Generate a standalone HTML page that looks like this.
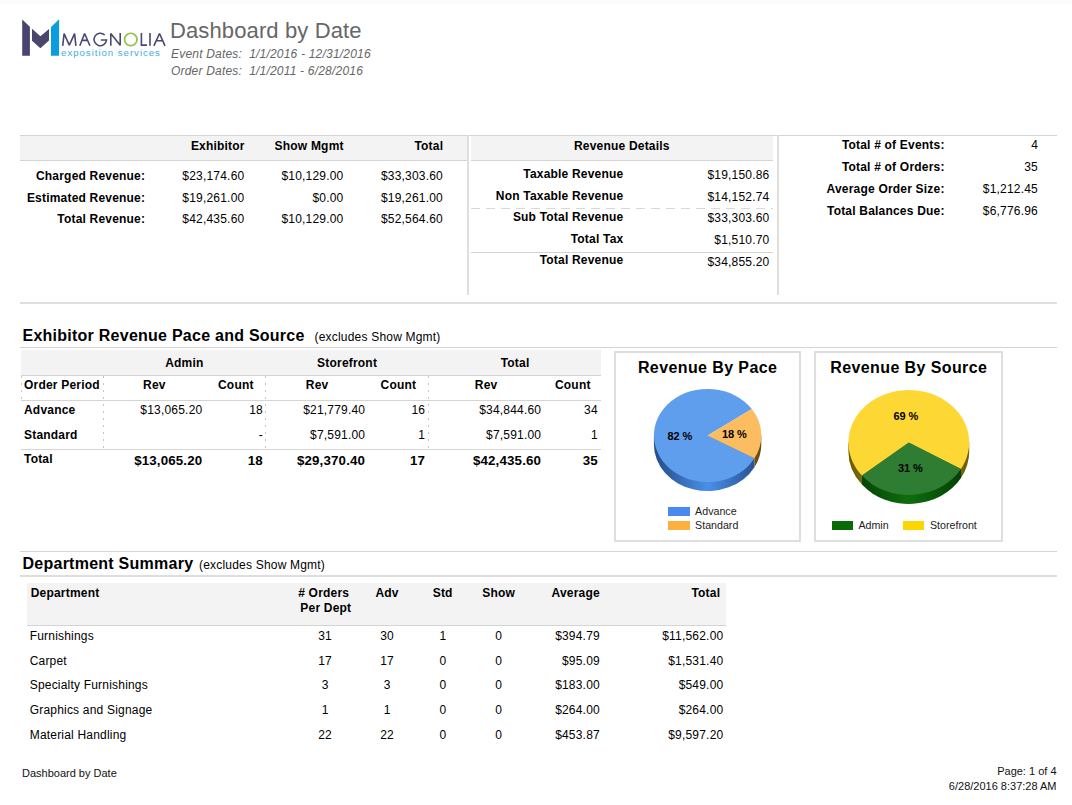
<!DOCTYPE html>
<html><head><meta charset="utf-8"><style>
html,body{margin:0;padding:0;background:#fff;width:1072px;height:805px;overflow:hidden;position:relative}
</style></head><body>
<div style="position:absolute;left:0px;top:0px;width:1072px;height:4px;background:#fbfbfb;"></div>
<div style="position:absolute;left:20px;top:135px;width:1037px;height:1px;background:#d4d4d4;"></div>
<div style="position:absolute;left:20px;top:136px;width:447px;height:24px;background:#f3f3f3;"></div>
<div style="position:absolute;left:20px;top:160px;width:447px;height:1px;background:#d4d4d4;"></div>
<div style="position:absolute;left:467px;top:135px;width:2px;height:160px;background:#dedede;"></div>
<div style="position:absolute;left:471px;top:136px;width:302px;height:24px;background:#f3f3f3;"></div>
<div style="position:absolute;left:471px;top:160px;width:302px;height:1px;background:#d4d4d4;"></div>
<div style="position:absolute;left:471px;top:208px;width:302px;height:1px;background:repeating-linear-gradient(90deg,#d8d8d8 0 9px,transparent 9px 15px)"></div>
<div style="position:absolute;left:471px;top:252px;width:302px;height:1px;background:#d4d4d4;"></div>
<div style="position:absolute;left:777px;top:135px;width:2px;height:160px;background:#dedede;"></div>
<div style="position:absolute;left:20px;top:302px;width:1037px;height:2px;background:#dedede;"></div>
<div style="position:absolute;left:20px;top:347px;width:1037px;height:1px;background:#d4d4d4;"></div>
<div style="position:absolute;left:21px;top:350px;width:580px;height:25px;background:#f3f3f3;"></div>
<div style="position:absolute;left:21px;top:375px;width:580px;height:1px;background:#d4d4d4;"></div>
<div style="position:absolute;left:21px;top:400px;width:580px;height:1px;background:#d4d4d4;"></div>
<div style="position:absolute;left:21px;top:449px;width:580px;height:1px;background:#d4d4d4;"></div>
<div style="position:absolute;left:21px;top:376px;width:1px;height:24px;background:repeating-linear-gradient(180deg,#c4c4c4 0 2px,transparent 2px 7px)"></div>
<div style="position:absolute;left:103px;top:376px;width:1px;height:73px;background:repeating-linear-gradient(180deg,#c4c4c4 0 2px,transparent 2px 7px)"></div>
<div style="position:absolute;left:265px;top:376px;width:1px;height:73px;background:repeating-linear-gradient(180deg,#c4c4c4 0 2px,transparent 2px 7px)"></div>
<div style="position:absolute;left:428px;top:376px;width:1px;height:73px;background:repeating-linear-gradient(180deg,#c4c4c4 0 2px,transparent 2px 7px)"></div>
<div style="position:absolute;left:614px;top:351px;width:183px;height:187px;border:2px solid #dedede"></div>
<div style="position:absolute;left:814px;top:351px;width:185px;height:187px;border:2px solid #dedede"></div>
<svg style="position:absolute;left:0;top:0" width="1072" height="805">
<defs>
<linearGradient id="gb" x1="653" x2="762" y1="0" y2="0" gradientUnits="userSpaceOnUse"><stop offset="0" stop-color="#234a85"/><stop offset="0.5" stop-color="#4a8fe8"/><stop offset="1" stop-color="#234a85"/></linearGradient>
<linearGradient id="gy" x1="848" x2="970" y1="0" y2="0" gradientUnits="userSpaceOnUse"><stop offset="0" stop-color="#6a5c00"/><stop offset="0.5" stop-color="#a08c10"/><stop offset="1" stop-color="#6a5c00"/></linearGradient>
<linearGradient id="go" x1="653" x2="762" y1="0" y2="0" gradientUnits="userSpaceOnUse"><stop offset="0" stop-color="#6a4a10"/><stop offset="0.5" stop-color="#a07830"/><stop offset="1" stop-color="#6a4a10"/></linearGradient>
<linearGradient id="gg" x1="848" x2="970" y1="0" y2="0" gradientUnits="userSpaceOnUse"><stop offset="0" stop-color="#033803"/><stop offset="0.5" stop-color="#0e6e0e"/><stop offset="1" stop-color="#033803"/></linearGradient>
</defs>
<path d="M707.60,435.50 L754.48,458.23 L754.48,467.23 A53.7,46.6 0 0 1 653.90,444.50 L653.90,435.50 Z" fill="url(#gb)"/>
<path d="M707.60,435.50 L761.30,435.50 L761.30,444.50 A53.7,46.6 0 0 1 754.48,467.23 L754.48,458.23 Z" fill="url(#go)"/>
<path d="M707.60,435.50 L754.48,458.23 A53.7,46.6 0 1 1 751.80,409.04 Z" fill="#5f9ded"/>
<path d="M707.60,435.50 L751.80,409.04 A53.7,46.6 0 0 1 754.48,458.23 Z" fill="#fbbd5f"/>
<path d="M908.80,442.50 L969.20,442.50 L969.20,451.50 A60.4,52.5 0 0 1 961.00,477.91 L961.00,468.91 Z" fill="url(#gy)"/>
<path d="M908.80,442.50 L861.93,475.61 L861.93,484.61 A60.4,52.5 0 0 1 848.40,451.50 L848.40,442.50 Z" fill="url(#gy)"/>
<path d="M908.80,442.50 L961.00,468.91 L961.00,477.91 A60.4,52.5 0 0 1 861.93,484.61 L861.93,475.61 Z" fill="url(#gg)"/>
<path d="M908.80,442.50 L861.93,475.61 A60.4,52.5 0 1 1 961.00,468.91 Z" fill="#fdd835"/>
<path d="M908.80,442.50 L961.00,468.91 A60.4,52.5 0 0 1 861.93,475.61 Z" fill="#2e7d32"/>
<rect x="668" y="507" width="22" height="9" fill="#4a8af0"/>
<rect x="668" y="521" width="22" height="9" fill="#fbb040"/>
<rect x="832" y="521" width="21" height="9" fill="#086a08"/>
<rect x="903" y="521" width="21" height="9" fill="#fdd600"/>
<polygon points="22.2,19.5 29.9,26.7 29.9,55.8 22.2,55.8" fill="#48456e"/>
<polygon points="32,28.7 40.4,36.3 49,29 49,40.4 40.4,48.3 32,40.7" fill="#48456e"/>
<polygon points="51,27 59.1,19.2 59.1,55.8 51,55.8" fill="#0c9de0"/>
<g fill="none" stroke="#4a4870" stroke-width="1.6" stroke-linecap="butt" stroke-linejoin="miter" stroke-miterlimit="1.6"><path d="M62.7,45.8 L64.1,33.6 L69.3,45.2 L74.6,33.6 L75.9,45.8"/><path d="M79.8,45.8 L84.6,33.5 L89.9,45.8 M81.9,40.4 L87.6,40.4"/><path d="M104.72,35.03 A6.25,6.25 0 1 0 106.53,40.0 L100.8,40.0"/><path d="M110.8,45.8 L110.8,33.6 L120.2,45.2 L120.2,32.9"/><path d="M141.4,32.9 L141.4,45.1 L147,45.1"/><path d="M150,32.9 L150,45.8"/><path d="M153.9,45.8 L159.5,33.5 L165.0,45.8 M156.3,40.7 L162.7,40.7"/></g>
<circle cx="130.75" cy="39.45" r="6.2" fill="none" stroke="#8dc63f" stroke-width="1.7"/>
<text x="61.1" y="55.9" font-family="Liberation Sans" font-size="9.6" textLength="98.8" lengthAdjust="spacing" fill="#45ace6" >exposition services</text>
</svg>
<div style="position:absolute;left:20px;top:551px;width:1037px;height:1px;background:#d4d4d4;"></div>
<div style="position:absolute;left:20px;top:575px;width:1037px;height:2px;background:#dedede;"></div>
<div style="position:absolute;left:27px;top:583px;width:699px;height:42px;background:#f3f3f3;"></div>
<div style="position:absolute;left:27px;top:625px;width:699px;height:1px;background:#d4d4d4;"></div>
<div style="position:absolute;top:18px;font:normal normal 22px/26px 'Liberation Sans',sans-serif;color:#666;white-space:pre;letter-spacing:0.12px;left:170px;">Dashboard by Date</div>
<div style="position:absolute;top:47px;font:italic normal 12px/14px 'Liberation Sans',sans-serif;color:#666;white-space:pre;letter-spacing:0.2px;left:171px;">Event Dates:  1/1/2016 - 12/31/2016</div>
<div style="position:absolute;top:63.5px;font:italic normal 12px/14px 'Liberation Sans',sans-serif;color:#666;white-space:pre;letter-spacing:0.2px;left:171px;">Order Dates:  1/1/2011 - 6/28/2016</div>
<div style="position:absolute;top:139px;font:normal bold 12px/14px 'Liberation Sans',sans-serif;color:#000;white-space:pre;letter-spacing:0.2px;right:827.30px;">Exhibitor</div>
<div style="position:absolute;top:139px;font:normal bold 12px/14px 'Liberation Sans',sans-serif;color:#000;white-space:pre;letter-spacing:0.2px;right:728.30px;">Show Mgmt</div>
<div style="position:absolute;top:139px;font:normal bold 12px/14px 'Liberation Sans',sans-serif;color:#000;white-space:pre;letter-spacing:0.2px;right:628.80px;">Total</div>
<div style="position:absolute;top:169px;font:normal bold 12px/14px 'Liberation Sans',sans-serif;color:#000;white-space:pre;letter-spacing:0.2px;right:926.80px;">Charged Revenue:</div>
<div style="position:absolute;top:169px;font:normal normal 12px/14px 'Liberation Sans',sans-serif;color:#000;white-space:pre;letter-spacing:0.2px;right:827.60px;">$23,174.60</div>
<div style="position:absolute;top:169px;font:normal normal 12px/14px 'Liberation Sans',sans-serif;color:#000;white-space:pre;letter-spacing:0.2px;right:728.50px;">$10,129.00</div>
<div style="position:absolute;top:169px;font:normal normal 12px/14px 'Liberation Sans',sans-serif;color:#000;white-space:pre;letter-spacing:0.2px;right:629.00px;">$33,303.60</div>
<div style="position:absolute;top:190.5px;font:normal bold 12px/14px 'Liberation Sans',sans-serif;color:#000;white-space:pre;letter-spacing:0.2px;right:926.80px;">Estimated Revenue:</div>
<div style="position:absolute;top:190.5px;font:normal normal 12px/14px 'Liberation Sans',sans-serif;color:#000;white-space:pre;letter-spacing:0.2px;right:827.60px;">$19,261.00</div>
<div style="position:absolute;top:190.5px;font:normal normal 12px/14px 'Liberation Sans',sans-serif;color:#000;white-space:pre;letter-spacing:0.2px;right:728.50px;">$0.00</div>
<div style="position:absolute;top:190.5px;font:normal normal 12px/14px 'Liberation Sans',sans-serif;color:#000;white-space:pre;letter-spacing:0.2px;right:629.00px;">$19,261.00</div>
<div style="position:absolute;top:211.5px;font:normal bold 12px/14px 'Liberation Sans',sans-serif;color:#000;white-space:pre;letter-spacing:0.2px;right:926.80px;">Total Revenue:</div>
<div style="position:absolute;top:211.5px;font:normal normal 12px/14px 'Liberation Sans',sans-serif;color:#000;white-space:pre;letter-spacing:0.2px;right:827.60px;">$42,435.60</div>
<div style="position:absolute;top:211.5px;font:normal normal 12px/14px 'Liberation Sans',sans-serif;color:#000;white-space:pre;letter-spacing:0.2px;right:728.50px;">$10,129.00</div>
<div style="position:absolute;top:211.5px;font:normal normal 12px/14px 'Liberation Sans',sans-serif;color:#000;white-space:pre;letter-spacing:0.2px;right:629.00px;">$52,564.60</div>
<div style="position:absolute;top:139px;font:normal bold 12px/14px 'Liberation Sans',sans-serif;color:#000;white-space:pre;letter-spacing:0.2px;left:321.80px;width:600px;text-align:center;">Revenue Details</div>
<div style="position:absolute;top:167.1px;font:normal bold 12px/14px 'Liberation Sans',sans-serif;color:#000;white-space:pre;letter-spacing:0.2px;right:448.60px;">Taxable Revenue</div>
<div style="position:absolute;top:168.1px;font:normal normal 12px/14px 'Liberation Sans',sans-serif;color:#000;white-space:pre;letter-spacing:0.2px;right:302.50px;">$19,150.86</div>
<div style="position:absolute;top:188.6px;font:normal bold 12px/14px 'Liberation Sans',sans-serif;color:#000;white-space:pre;letter-spacing:0.2px;right:448.60px;">Non Taxable Revenue</div>
<div style="position:absolute;top:189.6px;font:normal normal 12px/14px 'Liberation Sans',sans-serif;color:#000;white-space:pre;letter-spacing:0.2px;right:302.50px;">$14,152.74</div>
<div style="position:absolute;top:209.5px;font:normal bold 12px/14px 'Liberation Sans',sans-serif;color:#000;white-space:pre;letter-spacing:0.2px;right:448.60px;">Sub Total Revenue</div>
<div style="position:absolute;top:211.2px;font:normal normal 12px/14px 'Liberation Sans',sans-serif;color:#000;white-space:pre;letter-spacing:0.2px;right:302.50px;">$33,303.60</div>
<div style="position:absolute;top:231.5px;font:normal bold 12px/14px 'Liberation Sans',sans-serif;color:#000;white-space:pre;letter-spacing:0.2px;right:448.60px;">Total Tax</div>
<div style="position:absolute;top:233.1px;font:normal normal 12px/14px 'Liberation Sans',sans-serif;color:#000;white-space:pre;letter-spacing:0.2px;right:302.50px;">$1,510.70</div>
<div style="position:absolute;top:253.2px;font:normal bold 12px/14px 'Liberation Sans',sans-serif;color:#000;white-space:pre;letter-spacing:0.2px;right:448.60px;">Total Revenue</div>
<div style="position:absolute;top:254.7px;font:normal normal 12px/14px 'Liberation Sans',sans-serif;color:#000;white-space:pre;letter-spacing:0.2px;right:302.50px;">$34,855.20</div>
<div style="position:absolute;top:137.9px;font:normal bold 12px/14px 'Liberation Sans',sans-serif;color:#000;white-space:pre;letter-spacing:0.2px;right:127.40px;">Total # of Events:</div>
<div style="position:absolute;top:137.9px;font:normal normal 12px/14px 'Liberation Sans',sans-serif;color:#000;white-space:pre;letter-spacing:0.2px;right:34.00px;">4</div>
<div style="position:absolute;top:159.8px;font:normal bold 12px/14px 'Liberation Sans',sans-serif;color:#000;white-space:pre;letter-spacing:0.2px;right:127.40px;">Total # of Orders:</div>
<div style="position:absolute;top:159.8px;font:normal normal 12px/14px 'Liberation Sans',sans-serif;color:#000;white-space:pre;letter-spacing:0.2px;right:34.00px;">35</div>
<div style="position:absolute;top:181.9px;font:normal bold 12px/14px 'Liberation Sans',sans-serif;color:#000;white-space:pre;letter-spacing:0.2px;right:127.40px;">Average Order Size:</div>
<div style="position:absolute;top:181.9px;font:normal normal 12px/14px 'Liberation Sans',sans-serif;color:#000;white-space:pre;letter-spacing:0.2px;right:34.00px;">$1,212.45</div>
<div style="position:absolute;top:203.8px;font:normal bold 12px/14px 'Liberation Sans',sans-serif;color:#000;white-space:pre;letter-spacing:0.2px;right:127.40px;">Total Balances Due:</div>
<div style="position:absolute;top:203.8px;font:normal normal 12px/14px 'Liberation Sans',sans-serif;color:#000;white-space:pre;letter-spacing:0.2px;right:34.00px;">$6,776.96</div>
<div style="position:absolute;top:326px;font:normal bold 16px/19px 'Liberation Sans',sans-serif;color:#000;white-space:pre;letter-spacing:0.25px;left:22.5px;">Exhibitor Revenue Pace and Source</div>
<div style="position:absolute;top:330.3px;font:normal normal 12px/14px 'Liberation Sans',sans-serif;color:#000;white-space:pre;letter-spacing:0.2px;left:314.5px;">(excludes Show Mgmt)</div>
<div style="position:absolute;top:356px;font:normal bold 12px/14px 'Liberation Sans',sans-serif;color:#000;white-space:pre;letter-spacing:0.2px;left:-115.70px;width:600px;text-align:center;">Admin</div>
<div style="position:absolute;top:356px;font:normal bold 12px/14px 'Liberation Sans',sans-serif;color:#000;white-space:pre;letter-spacing:0.2px;left:47.10px;width:600px;text-align:center;">Storefront</div>
<div style="position:absolute;top:356px;font:normal bold 12px/14px 'Liberation Sans',sans-serif;color:#000;white-space:pre;letter-spacing:0.2px;left:215.10px;width:600px;text-align:center;">Total</div>
<div style="position:absolute;top:378px;font:normal bold 12px/14px 'Liberation Sans',sans-serif;color:#000;white-space:pre;letter-spacing:0.2px;left:24px;">Order Period</div>
<div style="position:absolute;top:378px;font:normal bold 12px/14px 'Liberation Sans',sans-serif;color:#000;white-space:pre;letter-spacing:0.2px;left:-145.60px;width:600px;text-align:center;">Rev</div>
<div style="position:absolute;top:378px;font:normal bold 12px/14px 'Liberation Sans',sans-serif;color:#000;white-space:pre;letter-spacing:0.2px;left:-64.20px;width:600px;text-align:center;">Count</div>
<div style="position:absolute;top:378px;font:normal bold 12px/14px 'Liberation Sans',sans-serif;color:#000;white-space:pre;letter-spacing:0.2px;left:17.10px;width:600px;text-align:center;">Rev</div>
<div style="position:absolute;top:378px;font:normal bold 12px/14px 'Liberation Sans',sans-serif;color:#000;white-space:pre;letter-spacing:0.2px;left:98.40px;width:600px;text-align:center;">Count</div>
<div style="position:absolute;top:378px;font:normal bold 12px/14px 'Liberation Sans',sans-serif;color:#000;white-space:pre;letter-spacing:0.2px;left:186.10px;width:600px;text-align:center;">Rev</div>
<div style="position:absolute;top:378px;font:normal bold 12px/14px 'Liberation Sans',sans-serif;color:#000;white-space:pre;letter-spacing:0.2px;left:272.80px;width:600px;text-align:center;">Count</div>
<div style="position:absolute;top:403px;font:normal bold 12px/14px 'Liberation Sans',sans-serif;color:#000;white-space:pre;letter-spacing:0.2px;left:24px;">Advance</div>
<div style="position:absolute;top:403px;font:normal normal 12px/14px 'Liberation Sans',sans-serif;color:#000;white-space:pre;letter-spacing:0.2px;right:869.60px;">$13,065.20</div>
<div style="position:absolute;top:403px;font:normal normal 12px/14px 'Liberation Sans',sans-serif;color:#000;white-space:pre;letter-spacing:0.2px;right:809.10px;">18</div>
<div style="position:absolute;top:403px;font:normal normal 12px/14px 'Liberation Sans',sans-serif;color:#000;white-space:pre;letter-spacing:0.2px;right:706.80px;">$21,779.40</div>
<div style="position:absolute;top:403px;font:normal normal 12px/14px 'Liberation Sans',sans-serif;color:#000;white-space:pre;letter-spacing:0.2px;right:646.80px;">16</div>
<div style="position:absolute;top:403px;font:normal normal 12px/14px 'Liberation Sans',sans-serif;color:#000;white-space:pre;letter-spacing:0.2px;right:530.80px;">$34,844.60</div>
<div style="position:absolute;top:403px;font:normal normal 12px/14px 'Liberation Sans',sans-serif;color:#000;white-space:pre;letter-spacing:0.2px;right:474.20px;">34</div>
<div style="position:absolute;top:428px;font:normal bold 12px/14px 'Liberation Sans',sans-serif;color:#000;white-space:pre;letter-spacing:0.2px;left:24px;">Standard</div>
<div style="position:absolute;top:428px;font:normal normal 12px/14px 'Liberation Sans',sans-serif;color:#000;white-space:pre;letter-spacing:0.2px;right:809.10px;">-</div>
<div style="position:absolute;top:428px;font:normal normal 12px/14px 'Liberation Sans',sans-serif;color:#000;white-space:pre;letter-spacing:0.2px;right:706.80px;">$7,591.00</div>
<div style="position:absolute;top:428px;font:normal normal 12px/14px 'Liberation Sans',sans-serif;color:#000;white-space:pre;letter-spacing:0.2px;right:646.80px;">1</div>
<div style="position:absolute;top:428px;font:normal normal 12px/14px 'Liberation Sans',sans-serif;color:#000;white-space:pre;letter-spacing:0.2px;right:530.80px;">$7,591.00</div>
<div style="position:absolute;top:428px;font:normal normal 12px/14px 'Liberation Sans',sans-serif;color:#000;white-space:pre;letter-spacing:0.2px;right:474.20px;">1</div>
<div style="position:absolute;top:452px;font:normal bold 12px/14px 'Liberation Sans',sans-serif;color:#000;white-space:pre;letter-spacing:0.2px;left:24px;">Total</div>
<div style="position:absolute;top:452.5px;font:normal bold 13.33px/16px 'Liberation Sans',sans-serif;color:#000;white-space:pre;letter-spacing:0.15px;right:869.65px;">$13,065.20</div>
<div style="position:absolute;top:452.5px;font:normal bold 13.33px/16px 'Liberation Sans',sans-serif;color:#000;white-space:pre;letter-spacing:0.15px;right:809.15px;">18</div>
<div style="position:absolute;top:452.5px;font:normal bold 13.33px/16px 'Liberation Sans',sans-serif;color:#000;white-space:pre;letter-spacing:0.15px;right:706.85px;">$29,370.40</div>
<div style="position:absolute;top:452.5px;font:normal bold 13.33px/16px 'Liberation Sans',sans-serif;color:#000;white-space:pre;letter-spacing:0.15px;right:646.85px;">17</div>
<div style="position:absolute;top:452.5px;font:normal bold 13.33px/16px 'Liberation Sans',sans-serif;color:#000;white-space:pre;letter-spacing:0.15px;right:530.85px;">$42,435.60</div>
<div style="position:absolute;top:452.5px;font:normal bold 13.33px/16px 'Liberation Sans',sans-serif;color:#000;white-space:pre;letter-spacing:0.15px;right:474.25px;">35</div>
<div style="position:absolute;top:358px;font:normal bold 16px/19px 'Liberation Sans',sans-serif;color:#000;white-space:pre;letter-spacing:0.4px;left:407.60px;width:600px;text-align:center;">Revenue By Pace</div>
<div style="position:absolute;top:358px;font:normal bold 16px/19px 'Liberation Sans',sans-serif;color:#000;white-space:pre;letter-spacing:0.4px;left:608.80px;width:600px;text-align:center;">Revenue By Source</div>
<div style="position:absolute;top:429.5px;font:normal bold 11px/13px 'Liberation Sans',sans-serif;color:#000;white-space:pre;letter-spacing:-0.1px;left:379.95px;width:600px;text-align:center;">82 %</div>
<div style="position:absolute;top:428px;font:normal bold 11px/13px 'Liberation Sans',sans-serif;color:#000;white-space:pre;letter-spacing:-0.1px;left:434.35px;width:600px;text-align:center;">18 %</div>
<div style="position:absolute;top:409.5px;font:normal bold 11px/13px 'Liberation Sans',sans-serif;color:#000;white-space:pre;letter-spacing:-0.1px;left:605.85px;width:600px;text-align:center;">69 %</div>
<div style="position:absolute;top:462px;font:normal bold 11px/13px 'Liberation Sans',sans-serif;color:#000;white-space:pre;letter-spacing:-0.1px;left:610.25px;width:600px;text-align:center;">31 %</div>
<div style="position:absolute;top:505.1px;font:normal normal 10.67px/13px 'Liberation Sans',sans-serif;color:#222;white-space:pre;letter-spacing:0px;left:695.1px;">Advance</div>
<div style="position:absolute;top:519px;font:normal normal 10.67px/13px 'Liberation Sans',sans-serif;color:#222;white-space:pre;letter-spacing:0px;left:695.1px;">Standard</div>
<div style="position:absolute;top:519px;font:normal normal 10.67px/13px 'Liberation Sans',sans-serif;color:#222;white-space:pre;letter-spacing:0px;left:858.4px;">Admin</div>
<div style="position:absolute;top:519px;font:normal normal 10.67px/13px 'Liberation Sans',sans-serif;color:#222;white-space:pre;letter-spacing:0px;left:930px;">Storefront</div>
<div style="position:absolute;top:554px;font:normal bold 16px/19px 'Liberation Sans',sans-serif;color:#000;white-space:pre;letter-spacing:0.25px;left:22.5px;">Department Summary</div>
<div style="position:absolute;top:558px;font:normal normal 12px/14px 'Liberation Sans',sans-serif;color:#000;white-space:pre;letter-spacing:0.2px;left:199px;">(excludes Show Mgmt)</div>
<div style="position:absolute;top:586px;font:normal bold 12px/14px 'Liberation Sans',sans-serif;color:#000;white-space:pre;letter-spacing:0.2px;left:30.7px;">Department</div>
<div style="position:absolute;top:586px;font:normal bold 12px/14px 'Liberation Sans',sans-serif;color:#000;white-space:pre;letter-spacing:0.2px;left:23.70px;width:600px;text-align:center;"># Orders</div>
<div style="position:absolute;top:601px;font:normal bold 12px/14px 'Liberation Sans',sans-serif;color:#000;white-space:pre;letter-spacing:0.2px;left:25.80px;width:600px;text-align:center;">Per Dept</div>
<div style="position:absolute;top:586px;font:normal bold 12px/14px 'Liberation Sans',sans-serif;color:#000;white-space:pre;letter-spacing:0.2px;left:87.10px;width:600px;text-align:center;">Adv</div>
<div style="position:absolute;top:586px;font:normal bold 12px/14px 'Liberation Sans',sans-serif;color:#000;white-space:pre;letter-spacing:0.2px;left:142.70px;width:600px;text-align:center;">Std</div>
<div style="position:absolute;top:586px;font:normal bold 12px/14px 'Liberation Sans',sans-serif;color:#000;white-space:pre;letter-spacing:0.2px;left:198.60px;width:600px;text-align:center;">Show</div>
<div style="position:absolute;top:586px;font:normal bold 12px/14px 'Liberation Sans',sans-serif;color:#000;white-space:pre;letter-spacing:0.2px;right:472.10px;">Average</div>
<div style="position:absolute;top:586px;font:normal bold 12px/14px 'Liberation Sans',sans-serif;color:#000;white-space:pre;letter-spacing:0.2px;right:351.80px;">Total</div>
<div style="position:absolute;top:629px;font:normal normal 12px/14px 'Liberation Sans',sans-serif;color:#000;white-space:pre;letter-spacing:0.2px;left:29.7px;">Furnishings</div>
<div style="position:absolute;top:629px;font:normal normal 12px/14px 'Liberation Sans',sans-serif;color:#000;white-space:pre;letter-spacing:0.2px;left:25.10px;width:600px;text-align:center;">31</div>
<div style="position:absolute;top:629px;font:normal normal 12px/14px 'Liberation Sans',sans-serif;color:#000;white-space:pre;letter-spacing:0.2px;left:87.10px;width:600px;text-align:center;">30</div>
<div style="position:absolute;top:629px;font:normal normal 12px/14px 'Liberation Sans',sans-serif;color:#000;white-space:pre;letter-spacing:0.2px;left:143.00px;width:600px;text-align:center;">1</div>
<div style="position:absolute;top:629px;font:normal normal 12px/14px 'Liberation Sans',sans-serif;color:#000;white-space:pre;letter-spacing:0.2px;left:198.60px;width:600px;text-align:center;">0</div>
<div style="position:absolute;top:629px;font:normal normal 12px/14px 'Liberation Sans',sans-serif;color:#000;white-space:pre;letter-spacing:0.2px;right:472.10px;">$394.79</div>
<div style="position:absolute;top:629px;font:normal normal 12px/14px 'Liberation Sans',sans-serif;color:#000;white-space:pre;letter-spacing:0.2px;right:348.60px;">$11,562.00</div>
<div style="position:absolute;top:653.5px;font:normal normal 12px/14px 'Liberation Sans',sans-serif;color:#000;white-space:pre;letter-spacing:0.2px;left:29.7px;">Carpet</div>
<div style="position:absolute;top:653.5px;font:normal normal 12px/14px 'Liberation Sans',sans-serif;color:#000;white-space:pre;letter-spacing:0.2px;left:25.10px;width:600px;text-align:center;">17</div>
<div style="position:absolute;top:653.5px;font:normal normal 12px/14px 'Liberation Sans',sans-serif;color:#000;white-space:pre;letter-spacing:0.2px;left:87.10px;width:600px;text-align:center;">17</div>
<div style="position:absolute;top:653.5px;font:normal normal 12px/14px 'Liberation Sans',sans-serif;color:#000;white-space:pre;letter-spacing:0.2px;left:143.00px;width:600px;text-align:center;">0</div>
<div style="position:absolute;top:653.5px;font:normal normal 12px/14px 'Liberation Sans',sans-serif;color:#000;white-space:pre;letter-spacing:0.2px;left:198.60px;width:600px;text-align:center;">0</div>
<div style="position:absolute;top:653.5px;font:normal normal 12px/14px 'Liberation Sans',sans-serif;color:#000;white-space:pre;letter-spacing:0.2px;right:472.10px;">$95.09</div>
<div style="position:absolute;top:653.5px;font:normal normal 12px/14px 'Liberation Sans',sans-serif;color:#000;white-space:pre;letter-spacing:0.2px;right:348.60px;">$1,531.40</div>
<div style="position:absolute;top:678px;font:normal normal 12px/14px 'Liberation Sans',sans-serif;color:#000;white-space:pre;letter-spacing:0.2px;left:29.7px;">Specialty Furnishings</div>
<div style="position:absolute;top:678px;font:normal normal 12px/14px 'Liberation Sans',sans-serif;color:#000;white-space:pre;letter-spacing:0.2px;left:25.10px;width:600px;text-align:center;">3</div>
<div style="position:absolute;top:678px;font:normal normal 12px/14px 'Liberation Sans',sans-serif;color:#000;white-space:pre;letter-spacing:0.2px;left:87.10px;width:600px;text-align:center;">3</div>
<div style="position:absolute;top:678px;font:normal normal 12px/14px 'Liberation Sans',sans-serif;color:#000;white-space:pre;letter-spacing:0.2px;left:143.00px;width:600px;text-align:center;">0</div>
<div style="position:absolute;top:678px;font:normal normal 12px/14px 'Liberation Sans',sans-serif;color:#000;white-space:pre;letter-spacing:0.2px;left:198.60px;width:600px;text-align:center;">0</div>
<div style="position:absolute;top:678px;font:normal normal 12px/14px 'Liberation Sans',sans-serif;color:#000;white-space:pre;letter-spacing:0.2px;right:472.10px;">$183.00</div>
<div style="position:absolute;top:678px;font:normal normal 12px/14px 'Liberation Sans',sans-serif;color:#000;white-space:pre;letter-spacing:0.2px;right:348.60px;">$549.00</div>
<div style="position:absolute;top:703px;font:normal normal 12px/14px 'Liberation Sans',sans-serif;color:#000;white-space:pre;letter-spacing:0.2px;left:29.7px;">Graphics and Signage</div>
<div style="position:absolute;top:703px;font:normal normal 12px/14px 'Liberation Sans',sans-serif;color:#000;white-space:pre;letter-spacing:0.2px;left:25.10px;width:600px;text-align:center;">1</div>
<div style="position:absolute;top:703px;font:normal normal 12px/14px 'Liberation Sans',sans-serif;color:#000;white-space:pre;letter-spacing:0.2px;left:87.10px;width:600px;text-align:center;">1</div>
<div style="position:absolute;top:703px;font:normal normal 12px/14px 'Liberation Sans',sans-serif;color:#000;white-space:pre;letter-spacing:0.2px;left:143.00px;width:600px;text-align:center;">0</div>
<div style="position:absolute;top:703px;font:normal normal 12px/14px 'Liberation Sans',sans-serif;color:#000;white-space:pre;letter-spacing:0.2px;left:198.60px;width:600px;text-align:center;">0</div>
<div style="position:absolute;top:703px;font:normal normal 12px/14px 'Liberation Sans',sans-serif;color:#000;white-space:pre;letter-spacing:0.2px;right:472.10px;">$264.00</div>
<div style="position:absolute;top:703px;font:normal normal 12px/14px 'Liberation Sans',sans-serif;color:#000;white-space:pre;letter-spacing:0.2px;right:348.60px;">$264.00</div>
<div style="position:absolute;top:727.7px;font:normal normal 12px/14px 'Liberation Sans',sans-serif;color:#000;white-space:pre;letter-spacing:0.2px;left:29.7px;">Material Handling</div>
<div style="position:absolute;top:727.7px;font:normal normal 12px/14px 'Liberation Sans',sans-serif;color:#000;white-space:pre;letter-spacing:0.2px;left:25.10px;width:600px;text-align:center;">22</div>
<div style="position:absolute;top:727.7px;font:normal normal 12px/14px 'Liberation Sans',sans-serif;color:#000;white-space:pre;letter-spacing:0.2px;left:87.10px;width:600px;text-align:center;">22</div>
<div style="position:absolute;top:727.7px;font:normal normal 12px/14px 'Liberation Sans',sans-serif;color:#000;white-space:pre;letter-spacing:0.2px;left:143.00px;width:600px;text-align:center;">0</div>
<div style="position:absolute;top:727.7px;font:normal normal 12px/14px 'Liberation Sans',sans-serif;color:#000;white-space:pre;letter-spacing:0.2px;left:198.60px;width:600px;text-align:center;">0</div>
<div style="position:absolute;top:727.7px;font:normal normal 12px/14px 'Liberation Sans',sans-serif;color:#000;white-space:pre;letter-spacing:0.2px;right:472.10px;">$453.87</div>
<div style="position:absolute;top:727.7px;font:normal normal 12px/14px 'Liberation Sans',sans-serif;color:#000;white-space:pre;letter-spacing:0.2px;right:348.60px;">$9,597.20</div>
<div style="position:absolute;top:767px;font:normal normal 11px/13px 'Liberation Sans',sans-serif;color:#111;white-space:pre;letter-spacing:0.0px;left:22px;">Dashboard by Date</div>
<div style="position:absolute;top:765px;font:normal normal 11px/13px 'Liberation Sans',sans-serif;color:#111;white-space:pre;letter-spacing:0.0px;right:15.50px;">Page: 1 of 4</div>
<div style="position:absolute;top:779.5px;font:normal normal 11px/13px 'Liberation Sans',sans-serif;color:#111;white-space:pre;letter-spacing:0.0px;right:15.50px;">6/28/2016 8:37:28 AM</div>
</body></html>
